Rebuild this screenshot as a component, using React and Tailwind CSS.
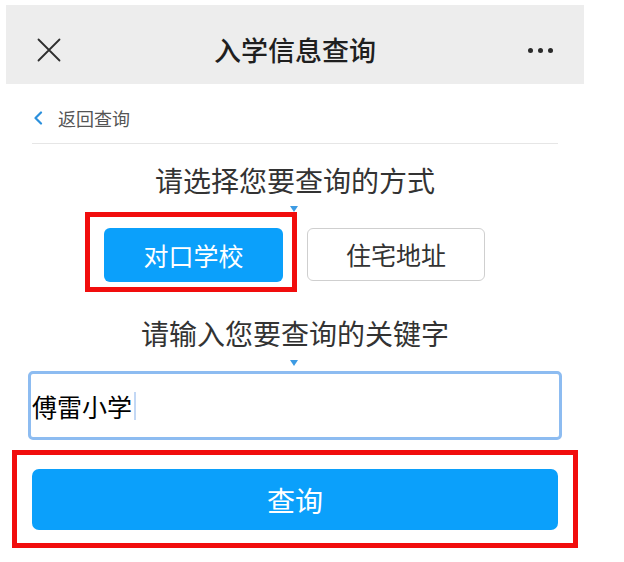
const cjk = { fontFamily: '"Noto Sans CJK SC", "Noto Sans", sans-serif' };

function CloseIcon() {
  return (
    <svg width="24" height="24" viewBox="0 0 24 24" fill="none" stroke="#2e2e2e" strokeWidth="1.8" strokeLinecap="round">
      <path d="M1.5 1.5 L22.5 22.5 M22.5 1.5 L1.5 22.5" />
    </svg>
  );
}

function Caret() {
  return (
    <svg width="8" height="6" viewBox="0 0 8 6" className="block">
      <path d="M0 0 H8 L4 6 Z" fill="#3d9be3" />
    </svg>
  );
}

export default function App() {
  return (
    <div className="w-[624px] h-[562px] bg-white pt-[5px] pl-[6px] overflow-hidden" style={cjk}>
      <div className="w-[578px]">
        {/* Top bar */}
        <div className="h-[79px] bg-[#ededed] grid grid-cols-[1fr_auto_1fr] items-center pt-[11px] px-[31px]">
          <div className="flex items-center">
            <CloseIcon />
          </div>
          <h1 className="text-[27px] leading-[32px] font-medium text-[#1f1f1f]">入学信息查询</h1>
          <div className="flex items-center justify-end gap-[5px]">
            <span className="w-[5px] h-[5px] rounded-full bg-[#2b2b2b]" />
            <span className="w-[5px] h-[5px] rounded-full bg-[#2b2b2b]" />
            <span className="w-[5px] h-[5px] rounded-full bg-[#2b2b2b]" />
          </div>
        </div>

        {/* Back link */}
        <div className="mt-[24px] h-[20px] pl-[27px] flex items-center gap-[15px]">
          <svg width="10" height="14" viewBox="0 0 10 14" fill="none" stroke="#2b90dc" strokeWidth="2.2" strokeLinecap="round" strokeLinejoin="round">
            <path d="M8 1.5 L2.5 7 L8 12.5" />
          </svg>
          <span className="text-[18px] leading-[20px] text-[#555]">返回查询</span>
        </div>
        <div className="mt-[15px] mx-[26px] border-t border-[#e6e6e6]" />

        {/* Query type */}
        <p className="mt-[20px] text-center text-[28px] leading-[32px] text-[#333]">请选择您要查询的方式</p>
        <div className="relative mt-[16px] flex items-start pl-[79px]">
          <div className="absolute left-[284px] top-[-6px]">
            <Caret />
          </div>
          <div className="border-[5px] border-[#f10d0d] pl-[14px] pt-[11px] pr-[9px] pb-[5px]">
            <button className="w-[179px] h-[54px] rounded-[6px] bg-[#0ba0fb] text-white text-[25px] leading-none">
              对口学校
            </button>
          </div>
          <button className="ml-[10px] mt-[16px] w-[178px] h-[53px] rounded-[6px] border border-[#cfcfcf] bg-white text-[#333] text-[25px] leading-none">
            住宅地址
          </button>
        </div>

        {/* Keyword */}
        <p className="mt-[25px] text-center text-[28px] leading-[32px] text-[#333]">请输入您要查询的关键字</p>
        <div className="relative">
          <div className="absolute left-[284px] top-[11px]">
            <Caret />
          </div>
        </div>
        <div className="mt-[22px] mx-[22px] h-[69px] border-[3px] border-[#8dbcf1] rounded-[5px] flex items-center pl-[1px]">
          <span className="text-[25px] leading-[30px] text-black">傅雷小学</span>
          <span className="ml-[2px] w-[2px] h-[28px] bg-[#c3d8f5]" />
        </div>

        {/* Submit */}
        <div className="mt-[10px] ml-[6px] w-[566px] border-[5px] border-[#f10d0d] px-[15px] pt-[14px] pb-[13px]">
          <button className="w-full h-[61px] rounded-[7px] bg-[#0ba0fb] text-white text-[28px] leading-none">
            查询
          </button>
        </div>
      </div>
    </div>
  );
}
